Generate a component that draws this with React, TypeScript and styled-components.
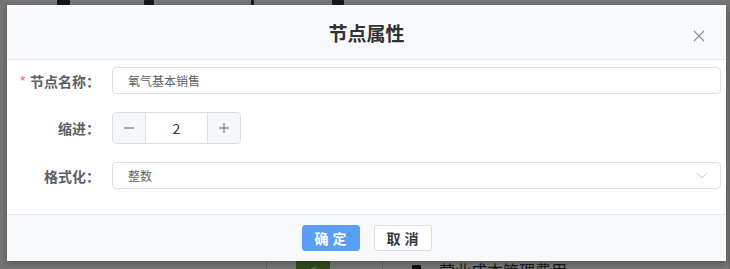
import React, { FunctionComponent, useState } from 'react'
import styled, { createGlobalStyle } from 'styled-components'

const GlobalStyle = createGlobalStyle`
  html, body {
    margin: 0;
    padding: 0;
  }
  body {
    font-family: "Noto Sans CJK SC", "Liberation Sans", sans-serif;
  }
`

const Page = styled('div')({
  position: 'relative',
  width: 730,
  height: 269,
  overflow: 'hidden',
  background: '#ffffff',
  display: 'flex',
  flexDirection: 'column',
})

const Toolbar = styled('div')({
  height: 12,
  display: 'flex',
  alignItems: 'flex-start',
  flexShrink: 0,
})

const ToolIcon = styled('span')<{ $left: number; $w: number }>(
  ({ $left, $w }) => ({
    marginLeft: $left,
    width: $w,
    height: 5,
    background: '#2e2e2e',
    borderRadius: 1,
  }),
)

const Workspace = styled('div')({
  flex: 1,
  display: 'flex',
})

const Column = styled('div')<{ $w?: number }>(({ $w }) => ({
  width: $w,
  flex: $w ? 'none' : 1,
  borderRight: '1px solid #d8d8d8',
  paddingTop: 248,
  boxSizing: 'border-box',
}))

const GreenTab = styled('div')({
  marginLeft: 29,
  width: 34,
  height: 28,
  background: '#67a43a',
  color: '#fff',
  fontSize: 14,
  textAlign: 'center',
  lineHeight: '18px',
})

const TreeItem = styled('div')({
  display: 'flex',
  alignItems: 'center',
  gap: 18,
  paddingLeft: 29,
  fontSize: 16,
  lineHeight: '20px',
  color: '#333',
})

const FileGlyph = styled('span')({
  width: 9,
  height: 11,
  background: '#222',
  borderRadius: 1,
})

const Overlay = styled('div')({
  position: 'absolute',
  inset: 0,
  background: 'rgba(0, 0, 0, 0.54)',
  padding: '5px 4px 0 7px',
})

const Dialog = styled('div')({
  width: 719,
  background: '#ffffff',
  boxShadow: '0 2px 6px rgba(0, 0, 0, 0.3)',
  display: 'flex',
  flexDirection: 'column',
})

const Header = styled('div')({
  position: 'relative',
  height: 54,
  background: '#f8f9fb',
  borderBottom: '1px solid #e6e8eb',
  display: 'flex',
  alignItems: 'center',
  justifyContent: 'center',
})

const Title = styled('h3')({
  margin: 0,
  fontSize: 19,
  fontWeight: 700,
  color: '#303133',
})

const CloseButton = styled('button')({
  position: 'absolute',
  right: 21,
  top: 25,
  width: 12,
  height: 12,
  padding: 0,
  border: 'none',
  background: 'transparent',
  cursor: 'pointer',
  display: 'flex',
})

const Body = styled('div')({
  padding: '7px 5px 25px 0',
  display: 'flex',
  flexDirection: 'column',
  gap: 18,
})

const FormRow = styled('div')({
  display: 'grid',
  gridTemplateColumns: '105px 1fr',
  alignItems: 'center',
})

const Label = styled('label')({
  textAlign: 'right',
  paddingRight: 12,
  fontSize: 14,
  fontWeight: 700,
  color: '#5a5e66',
  whiteSpace: 'nowrap',
})

const Required = styled('span')({
  color: '#f56c6c',
  marginRight: 4,
  fontWeight: 400,
})

const TextInput = styled('input')({
  height: 27,
  boxSizing: 'border-box',
  border: '1px solid #dcdfe6',
  borderRadius: 4,
  padding: '0 15px',
  fontFamily: 'inherit',
  fontSize: 12,
  color: '#606266',
  outline: 'none',
  width: '100%',
})

const Stepper = styled('div')({
  display: 'flex',
  width: 129,
  height: 32,
  boxSizing: 'border-box',
  border: '1px solid #dcdfe6',
  borderRadius: 4,
  overflow: 'hidden',
})

const StepButton = styled('span')<{ $side: 'left' | 'right' }>(({ $side }) => ({
  width: 32,
  flex: 'none',
  background: '#f5f7fa',
  color: '#606266',
  display: 'flex',
  alignItems: 'center',
  justifyContent: 'center',
  cursor: 'pointer',
  [$side === 'left' ? 'borderRight' : 'borderLeft']: '1px solid #dcdfe6',
}))

const StepValue = styled('span')({
  flex: 1,
  display: 'flex',
  alignItems: 'center',
  justifyContent: 'center',
  fontSize: 14,
  color: '#303133',
})

const Select = styled('div')({
  height: 27,
  boxSizing: 'border-box',
  border: '1px solid #dcdfe6',
  borderRadius: 4,
  padding: '0 12px 0 15px',
  display: 'flex',
  alignItems: 'center',
  justifyContent: 'space-between',
  fontSize: 12,
  color: '#606266',
})

const Footer = styled('div')({
  borderTop: '1px solid #e6e8eb',
  background: '#f8f9fb',
  padding: '10px 0',
  display: 'flex',
  justifyContent: 'center',
  gap: 14,
})

const Button = styled('button')<{ $primary?: boolean }>(({ $primary }) => ({
  width: 58,
  height: 26,
  boxSizing: 'border-box',
  borderRadius: 3,
  border: $primary ? '1px solid #5a9ef8' : '1px solid #dcdfe6',
  background: $primary ? '#5a9ef8' : '#ffffff',
  color: $primary ? '#ffffff' : '#3a3a3a',
  fontFamily: 'inherit',
  fontSize: 14,
  fontWeight: 700,
  letterSpacing: 4,
  paddingLeft: 4,
  paddingRight: 0,
  cursor: 'pointer',
}))

const Chevron: FunctionComponent = () => (
  <svg width="12" height="7" viewBox="0 0 12 7">
    <path d="M1 1 L6 6 L11 1" fill="none" stroke="#c0c4cc" strokeWidth="1" />
  </svg>
)

const App: FunctionComponent = () => {
  const [indent, setIndent] = useState(2)

  return (
    <>
      <GlobalStyle />
      <Page>
        <Toolbar>
          <ToolIcon $left={57} $w={13} />
          <ToolIcon $left={74} $w={10} />
          <ToolIcon $left={97} $w={3} />
          <ToolIcon $left={78} $w={12} />
        </Toolbar>
        <Workspace>
          <Column $w={267} />
          <Column $w={116}>
            <GreenTab>&lt;</GreenTab>
          </Column>
          <Column>
            <TreeItem>
              <FileGlyph />
              营业成本管理费用
            </TreeItem>
          </Column>
        </Workspace>

        <Overlay>
          <Dialog>
            <Header>
              <Title>节点属性</Title>
              <CloseButton aria-label="close">
                <svg width="12" height="12" viewBox="0 0 12 12">
                  <path
                    d="M1 1 L11 11 M11 1 L1 11"
                    stroke="#909399"
                    strokeWidth="1.1"
                  />
                </svg>
              </CloseButton>
            </Header>
            <Body>
              <FormRow>
                <Label>
                  <Required>*</Required>节点名称：
                </Label>
                <TextInput defaultValue="氧气基本销售" />
              </FormRow>
              <FormRow>
                <Label>缩进：</Label>
                <Stepper>
                  <StepButton $side="left" onClick={() => setIndent(indent - 1)}>
                    <svg width="12" height="12" viewBox="0 0 12 12">
                      <path d="M1 6 H11" stroke="#606266" strokeWidth="1" />
                    </svg>
                  </StepButton>
                  <StepValue>{indent}</StepValue>
                  <StepButton $side="right" onClick={() => setIndent(indent + 1)}>
                    <svg width="12" height="12" viewBox="0 0 12 12">
                      <path d="M1 6 H11 M6 1 V11" stroke="#606266" strokeWidth="1" />
                    </svg>
                  </StepButton>
                </Stepper>
              </FormRow>
              <FormRow>
                <Label>格式化：</Label>
                <Select>
                  <span>整数</span>
                  <Chevron />
                </Select>
              </FormRow>
            </Body>
            <Footer>
              <Button $primary>确定</Button>
              <Button>取消</Button>
            </Footer>
          </Dialog>
        </Overlay>
      </Page>
    </>
  )
}

export default App
